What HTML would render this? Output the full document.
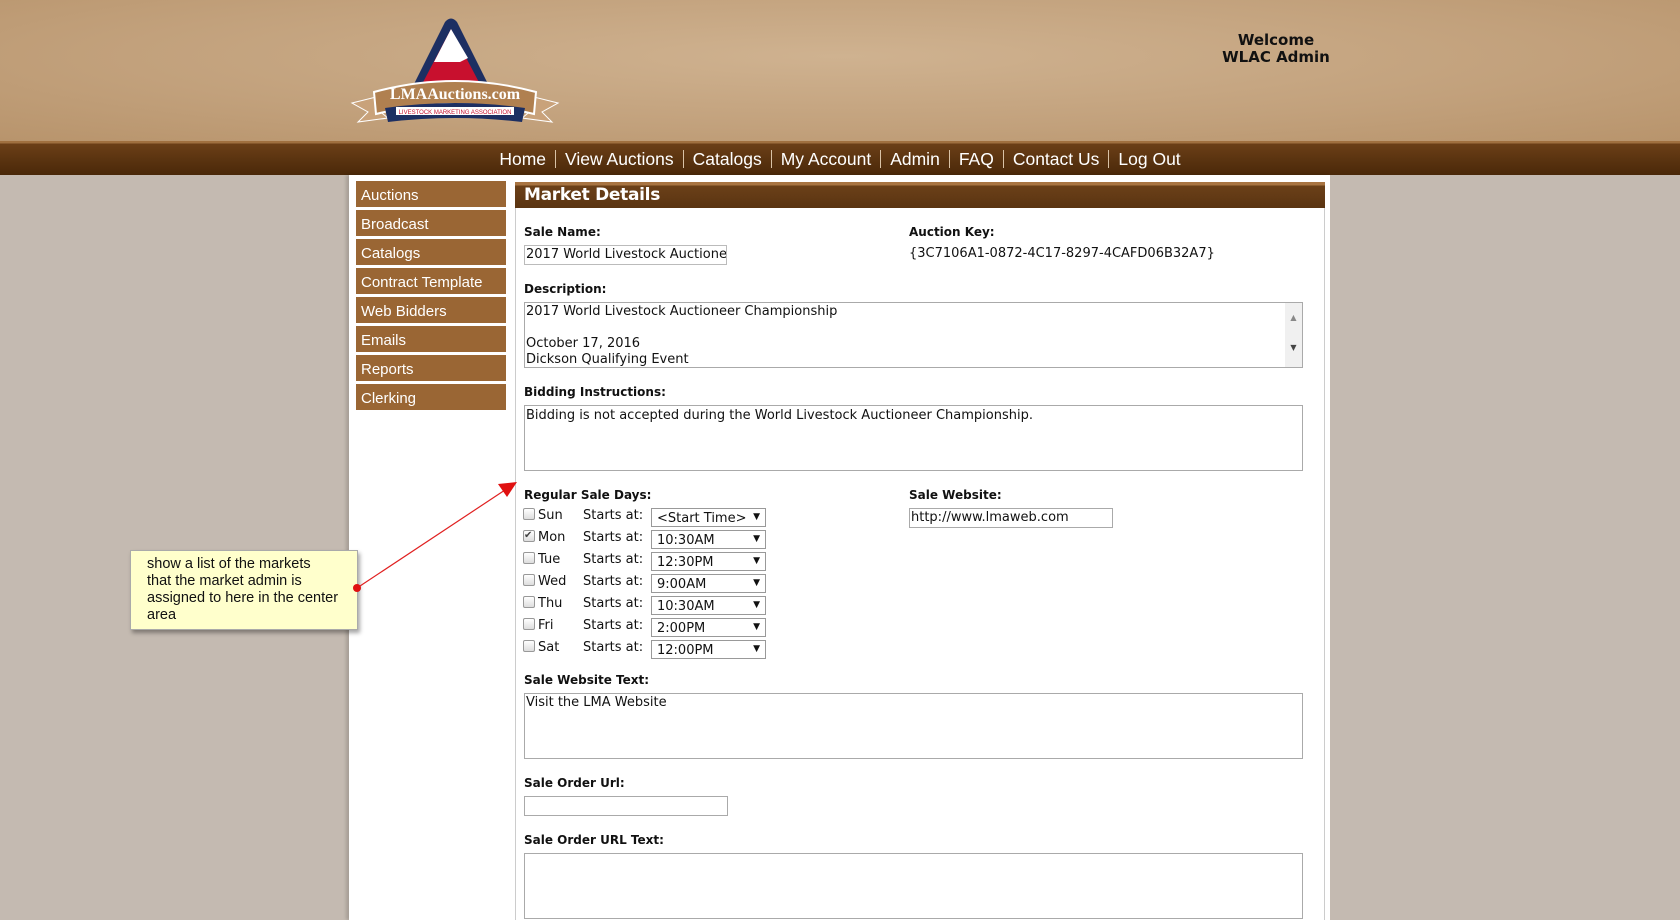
<!DOCTYPE html>
<html><head><meta charset="utf-8"><style>
*{margin:0;padding:0;box-sizing:border-box}
body{width:1680px;height:920px;overflow:hidden;background:#c4bab1;font-family:"DejaVu Sans",Verdana,sans-serif;position:relative}
.abs{position:absolute}
#hdr{left:0;top:0;width:1680px;height:141px;background:radial-gradient(ellipse at 50% 40%,#cfb290 0%,#c2a17c 60%,#b8946c 100%)}
#nav{left:0;top:141px;width:1680px;height:34px;background:linear-gradient(#a0703f 0,#a0703f 2px,#6b3f17 3px,#4a2809 100%)}
#nav div{position:absolute;top:8px;left:0;width:1680px;text-align:center;color:#fff;font:17.5px "Liberation Sans",Arial,sans-serif;letter-spacing:0px}
#nav span.s{display:inline-block;width:1px;height:18px;background:#d9c2a6;margin:0 9px;vertical-align:-3px}
#panel{left:349px;top:175px;width:981px;height:745px;background:#fff;box-shadow:-3px 0 3px rgba(0,0,0,.15)}
.menu{left:356px;width:150px;height:26px;background:#9a6634;color:#fff;font:15px "Liberation Sans",Arial,sans-serif;padding:6px 5px}
#mh{left:515px;top:182px;width:810px;height:26px;background:linear-gradient(#a87442 0,#a87442 3px,#6b4019 4px,#5a3411 100%);color:#fff;font:bold 17px "DejaVu Sans",sans-serif;padding:3px 9px;letter-spacing:-0.3px}
#cb{left:515px;top:208px;width:810px;height:712px;border-left:1px solid #ccc;border-right:1px solid #ccc}
.lb{font:bold 12px "DejaVu Sans",Verdana,sans-serif;color:#111}
.tx{font:13px "DejaVu Sans",Verdana,sans-serif;color:#111}
.ta{border:1px solid #aaa;background:#fff;font:13px "DejaVu Sans",Verdana,sans-serif;color:#111;padding:1px 1px;line-height:16px}
.sel{left:651px;width:115px;height:19px;border:1px solid #999;background:#fff;font:13px "DejaVu Sans",Verdana,sans-serif;padding:2px 5px;color:#111}
.sel:after{content:"▼";position:absolute;right:5px;top:3px;font-size:9px}
.cbx{left:523px;width:12px;height:12px;border:1px solid #999;border-radius:2px;background:linear-gradient(#fff,#ddd)}
.day{left:538px}
.st{left:583px}
</style></head><body>
<div id="hdr" class="abs"></div>
<svg class="abs" style="left:350px;top:18px" width="210" height="110" viewBox="0 0 210 110">
<path d="M95 4 Q101 -3 107 4 L142 74 L60 74 Z" fill="#1d2f62"/>
<path d="M101 11 L70 70 L132 70 Z" fill="#c8102e"/>
<path d="M101 11 L84 44 L110 44 L118 40 Z" fill="#fff"/>
<path d="M2 85 L30 78 L28 92 L38 100 L8 104 L18 94 Z" fill="#c9a27a" stroke="#fff"/>
<path d="M208 85 L180 78 L182 92 L172 100 L202 104 L192 94 Z" fill="#c9a27a" stroke="#fff"/>
<path d="M24 74 Q105 52 186 74 L184 96 Q105 76 26 96 Z" fill="#b08050" stroke="#fff" stroke-width="2"/>
<path d="M35 90 Q105 80 175 90 L172 104 Q105 96 38 104 Z" fill="#1d2f62"/>
<rect x="46" y="89" width="118" height="8" fill="#fff"/>
<text x="105" y="81" text-anchor="middle" font-family="Liberation Serif,serif" font-weight="bold" font-size="16" fill="#fff">LMAAuctions.com</text>
<text x="105" y="96" text-anchor="middle" font-family="Liberation Sans,sans-serif" font-size="6" fill="#c8102e">LIVESTOCK MARKETING ASSOCIATION</text>
</svg>
<div class="abs" style="left:1196px;top:32px;width:160px;text-align:center;font:bold 15px 'DejaVu Sans',sans-serif;color:#111;line-height:17px">Welcome<br>WLAC Admin</div>
<div id="nav" class="abs"><div>Home<span class="s"></span>View Auctions<span class="s"></span>Catalogs<span class="s"></span>My Account<span class="s"></span>Admin<span class="s"></span>FAQ<span class="s"></span>Contact Us<span class="s"></span>Log Out</div></div>
<div id="panel" class="abs"></div>
<div class="menu abs" style="top:181px">Auctions</div>
<div class="menu abs" style="top:210px">Broadcast</div>
<div class="menu abs" style="top:239px">Catalogs</div>
<div class="menu abs" style="top:268px">Contract Template</div>
<div class="menu abs" style="top:297px">Web Bidders</div>
<div class="menu abs" style="top:326px">Emails</div>
<div class="menu abs" style="top:355px">Reports</div>
<div class="menu abs" style="top:384px">Clerking</div>
<div id="cb" class="abs"></div>
<div id="mh" class="abs">Market Details</div>

<div class="abs lb" style="left:524px;top:225px">Sale Name:</div>
<div class="abs ta" style="left:524px;top:245px;width:203px;height:20px;overflow:hidden;white-space:nowrap;border-color:#bbb">2017 World Livestock Auctioneer</div>
<div class="abs lb" style="left:909px;top:225px">Auction Key:</div>
<div class="abs tx" style="left:909px;top:246px">{3C7106A1-0872-4C17-8297-4CAFD06B32A7}</div>

<div class="abs lb" style="left:524px;top:282px">Description:</div>
<div class="abs ta" style="left:524px;top:302px;width:779px;height:66px">2017 World Livestock Auctioneer Championship<br><br>October 17, 2016<br>Dickson Qualifying Event</div>
<div class="abs" style="left:1285px;top:303px;width:17px;height:64px;background:#f0f0f0;font-size:8px;color:#888;text-align:center;line-height:30px">▲<br><span style="color:#444">▼</span></div>

<div class="abs lb" style="left:524px;top:385px">Bidding Instructions:</div>
<div class="abs ta" style="left:524px;top:405px;width:779px;height:66px;padding-top:2px">Bidding is not accepted during the World Livestock Auctioneer Championship.</div>

<div class="abs lb" style="left:524px;top:488px">Regular Sale Days:</div>
<div class="abs lb" style="left:909px;top:488px">Sale Website:</div>
<div class="abs ta" style="left:909px;top:508px;width:204px;height:20px">http://www.lmaweb.com</div>

<div class="abs cbx" style="top:508px"></div><div class="abs tx day" style="top:508px">Sun</div><div class="abs tx st" style="top:508px">Starts at:</div><div class="abs sel" style="top:508px">&lt;Start Time&gt;</div>
<div class="abs cbx" style="top:530px;font-size:10px;line-height:10px;color:#444">✔</div><div class="abs tx day" style="top:530px">Mon</div><div class="abs tx st" style="top:530px">Starts at:</div><div class="abs sel" style="top:530px">10:30AM</div>
<div class="abs cbx" style="top:552px"></div><div class="abs tx day" style="top:552px">Tue</div><div class="abs tx st" style="top:552px">Starts at:</div><div class="abs sel" style="top:552px">12:30PM</div>
<div class="abs cbx" style="top:574px"></div><div class="abs tx day" style="top:574px">Wed</div><div class="abs tx st" style="top:574px">Starts at:</div><div class="abs sel" style="top:574px">9:00AM</div>
<div class="abs cbx" style="top:596px"></div><div class="abs tx day" style="top:596px">Thu</div><div class="abs tx st" style="top:596px">Starts at:</div><div class="abs sel" style="top:596px">10:30AM</div>
<div class="abs cbx" style="top:618px"></div><div class="abs tx day" style="top:618px">Fri</div><div class="abs tx st" style="top:618px">Starts at:</div><div class="abs sel" style="top:618px">2:00PM</div>
<div class="abs cbx" style="top:640px"></div><div class="abs tx day" style="top:640px">Sat</div><div class="abs tx st" style="top:640px">Starts at:</div><div class="abs sel" style="top:640px">12:00PM</div>

<div class="abs lb" style="left:524px;top:673px">Sale Website Text:</div>
<div class="abs ta" style="left:524px;top:693px;width:779px;height:66px">Visit the LMA Website</div>
<div class="abs lb" style="left:524px;top:776px">Sale Order Url:</div>
<div class="abs ta" style="left:524px;top:796px;width:204px;height:20px"></div>
<div class="abs lb" style="left:524px;top:833px">Sale Order URL Text:</div>
<div class="abs ta" style="left:524px;top:853px;width:779px;height:66px"></div>

<div class="abs" style="left:130px;top:550px;width:228px;height:80px;background:#ffffcc;border:1px solid #aaa;box-shadow:2px 3px 4px rgba(0,0,0,.35);font:14.5px 'Liberation Sans',Arial,sans-serif;color:#111;padding:5px 4px 0 16px;line-height:17px;white-space:nowrap">show a list of the markets<br>that the market admin is<br>assigned to here in the center<br>area</div>
<svg class="abs" style="left:0;top:0" width="1680" height="920">
<line x1="357" y1="588" x2="505" y2="490" stroke="#e02020" stroke-width="1.2"/>
<polygon points="517,482 498,484 507,497" fill="#e01010"/>
<circle cx="357" cy="588" r="4" fill="#e01010"/>
</svg>
</body></html>
